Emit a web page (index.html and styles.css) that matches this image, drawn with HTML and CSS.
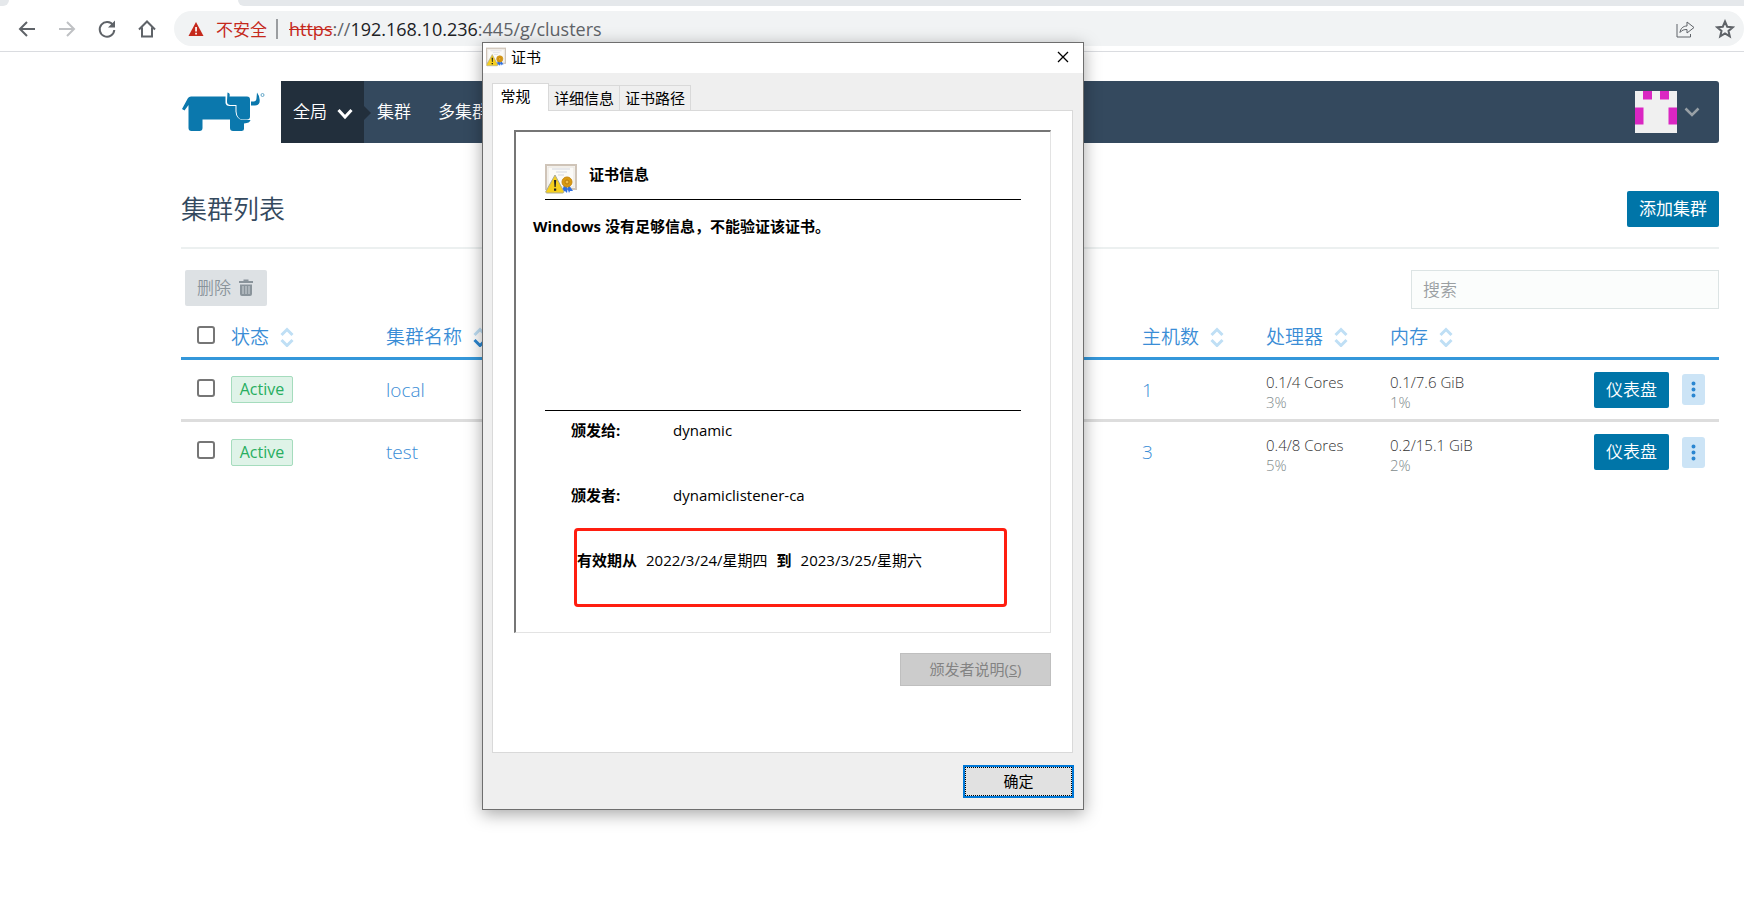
FILE: index.html
```html
<!DOCTYPE html>
<html lang="zh-CN">
<head>
<meta charset="utf-8">
<title>集群列表</title>
<link rel="stylesheet" href="styles.css">
</head>
<body>
<svg class="defs" width="0" height="0" aria-hidden="true">
  <symbol id="sort" viewBox="0 0 14 20">
    <path class="sort-up" d="M1.500 8l5.500-5.500 5.500 5.500" fill="none" stroke-width="3"/>
    <path class="sort-down" d="M1.500 13l5.500 5.500 5.500-5.500" fill="none" stroke-width="3"/>
  </symbol>
  <symbol id="cert" viewBox="0 0 32 30">
    <rect x="1" y="1" width="30" height="24" fill="#fbfaf7" stroke="#cfc4b8" stroke-width="2"/>
    <rect x="3" y="3" width="26" height="20" fill="none" stroke="#e9e4dd"/>
    <path d="M7 5h18M11 8h11M13 11h6" stroke="#d3d6de"/>
    <path d="M19 21l-2 7 3-1 2 2 1-6zM24 21l4 6-3 0-1 2-2-6z" fill="#2f6fe0"/>
    <circle cx="22" cy="18" r="5" fill="#d99a12" stroke="#c98b12"/>
    <circle cx="22" cy="18" r="2" fill="#f0bd45" stroke="#b87a0c"/>
    <path d="M10 11L0.800 27.500q-.3 1.300 1 1.500h16q1.300-.2 1-1.500z" fill="#f6cf1e" stroke="#a9a996"/>
    <path d="M9 16h2.200l-.5 7H9.500zM9 24.500h2.200v2.200H9z" fill="#222"/>
  </symbol>
</svg>

<header class="browser">
  <div class="tabstrip"><div class="tab-prev"></div><div class="tab-current"></div><div class="tab-rest"></div></div>
  <div class="toolbar">
    <div class="nav-buttons">
      <button class="nav-btn" aria-label="后退"><svg width="20" height="20" viewBox="0 0 20 20"><path d="M18 10H3M10 3l-7 7 7 7"/></svg></button>
      <button class="nav-btn nav-off" aria-label="前进"><svg width="20" height="20" viewBox="0 0 20 20"><path d="M2 10h15M10 3l7 7-7 7"/></svg></button>
      <button class="nav-btn" aria-label="刷新"><svg width="20" height="20" viewBox="0 0 20 20"><path d="M16.200 6.500A7.300 7.300 0 1 0 17.300 11"/><path class="solid" d="M18 1.500v7h-7z"/></svg></button>
      <button class="nav-btn" aria-label="主页"><svg width="20" height="20" viewBox="0 0 20 20"><path d="M2 10.500l8-8 8 8M5 8.500v9h10v-9"/></svg></button>
    </div>
    <div class="address">
      <svg width="16" height="16" viewBox="0 0 16 16"><path d="M8 1l7.500 14H.5z" fill="#c5291c"/><path d="M7.200 6h1.700v4.500H7.200zM7.200 11.700h1.700v1.700H7.200z" fill="#fff"/></svg>
      <span class="insecure">不安全</span>
      <span class="divider"></span>
      <span class="url"><s>https</s>://<b>192.168.10.236</b>:445/g/clusters</span>
      <div class="address-actions">
        <button class="nav-btn" aria-label="分享"><svg width="20" height="20" viewBox="0 0 20 20"><path class="thin" d="M2 5v13H15.500V15M5 13.500c.5-4 3-6.500 7-6.500V3l7 5.500-7 5.500V10.500c-3 0-5 .5-7 3z"/></svg></button>
        <button class="nav-btn" aria-label="收藏"><svg width="20" height="20" viewBox="0 0 20 20"><path d="M10 2.500l2.200 5.200 5.600.5-4.300 3.700 1.300 5.500-4.800-3-4.800 3 1.300-5.500-4.300-3.700 5.600-.5z"/></svg></button>
      </div>
    </div>
  </div>
</header>

<main class="page">
  <div class="topbar">
    <svg class="logo" width="84" height="42" viewBox="0 0 84 42" role="img" aria-label="Rancher">
      <path d="M7 6Q8 4.500 10 4.500H44.500V11Q45 14 48.500 14H54.500V19.500Q55 26.500 61 28H69.500Q69 31 63 31.500V37Q63 39 60.500 39H52Q49 39 49 36V27.500H21.500V36Q21.500 39 18.500 39H10.500Q7.500 39 7.500 36V13L3.500 18.500 1 17z" fill="#0b78ad"/>
      <path d="M46.500 .5Q49.500 1 48.500 4.500H66Q69 4.500 69 7.500V24.500Q69 27.500 66 27.500H61Q56 26.500 55.500 19.500L55.500 13H49Q45.500 12.500 46 8.500z" fill="#0b78ad"/>
      <path d="M76 .5Q79.500 5 78.500 10.500Q77.500 13.500 74 13.500H70V9.500H73Q75.500 9 75.500 6z" fill="#0b78ad"/>
      <circle cx="81.500" cy="3" r="1.500" fill="none" stroke="#62a6c8"/>
    </svg>
    <nav class="menu">
      <a class="scope" href="#">全局<svg width="16" height="12" viewBox="0 0 16 12"><path d="M1.500 2l6.500 7 6.500-7" fill="none" stroke="#fff" stroke-width="3"/></svg></a>
      <a class="menu-link" href="#">集群</a>
      <a class="menu-link" href="#">多集群</a>
      <button class="user" aria-label="用户">
        <svg width="42" height="42" viewBox="0 0 42 42"><path d="M0 0h42v42H0z" fill="#f0f0f0"/><path d="M8 0h9v8.500H8zM25 0h9v8.500h-9zM0 16.500h8.500v17H0zM33.500 16.500H42v17h-8.500z" fill="#da26c2"/></svg>
        <svg width="16" height="12" viewBox="0 0 16 12"><path d="M1.500 2.500l6.500 6.500 6.500-6.500" fill="none" stroke="#98a0a6" stroke-width="2.500"/></svg>
      </button>
    </nav>
  </div>

  <div class="heading">
    <h1>集群列表</h1>
    <button class="btn">添加集群</button>
  </div>

  <div class="tools">
    <button class="btn btn-delete" disabled>删除<svg width="14" height="18" viewBox="0 0 14 18"><path d="M0 2h4.500V.5h5V2H14v2H0zM1 5.500h12V15q0 2-2 2H3q-2 0-2-2z" fill="#8a949b"/><path d="M4 7v8M7 7v8M10 7v8" stroke="#cfd5d9"/></svg></button>
    <input class="search" type="text" placeholder="搜索" aria-label="搜索">
  </div>

  <table class="clusters">
    <colgroup><col class="c-check"><col class="c-state"><col><col class="c-num"><col class="c-num"><col class="c-mem"><col class="c-act"></colgroup>
    <thead>
      <tr>
        <th><input type="checkbox" aria-label="全选"></th>
        <th><a href="#">状态<svg class="sort" width="14" height="20"><use href="#sort"/></svg></a></th>
        <th><a href="#">集群名称<svg class="sort sorted" width="14" height="20"><use href="#sort"/></svg></a></th>
        <th><a href="#">主机数<svg class="sort" width="14" height="20"><use href="#sort"/></svg></a></th>
        <th><a href="#">处理器<svg class="sort" width="14" height="20"><use href="#sort"/></svg></a></th>
        <th><a href="#">内存<svg class="sort" width="14" height="20"><use href="#sort"/></svg></a></th>
        <th></th>
      </tr>
    </thead>
    <tbody>
      <tr>
        <td><input type="checkbox" aria-label="local"></td>
        <td><span class="badge">Active</span></td>
        <td><a href="#">local</a></td>
        <td><a href="#">1</a></td>
        <td class="usage">0.1/4 Cores<small>3%</small></td>
        <td class="usage">0.1/7.6 GiB<small>1%</small></td>
        <td><div class="actions"><button class="btn">仪表盘</button><button class="more" aria-label="更多"><svg width="5" height="17" viewBox="0 0 5 17"><path d="M2.500 2.500v.01M2.500 8.500v.01M2.500 14.500v.01"/></svg></button></div></td>
      </tr>
      <tr>
        <td><input type="checkbox" aria-label="test"></td>
        <td><span class="badge">Active</span></td>
        <td><a href="#">test</a></td>
        <td><a href="#">3</a></td>
        <td class="usage">0.4/8 Cores<small>5%</small></td>
        <td class="usage">0.2/15.1 GiB<small>2%</small></td>
        <td><div class="actions"><button class="btn">仪表盘</button><button class="more" aria-label="更多"><svg width="5" height="17" viewBox="0 0 5 17"><path d="M2.500 2.500v.01M2.500 8.500v.01M2.500 14.500v.01"/></svg></button></div></td>
      </tr>
    </tbody>
  </table>
</main>

<section class="dialog" role="dialog" aria-labelledby="dialog-title">
  <div class="titlebar">
    <svg width="20" height="20"><use href="#cert"/></svg>
    <span id="dialog-title">证书</span>
    <button class="close" aria-label="关闭"><svg width="12" height="12" viewBox="0 0 12 12"><path d="M1 1l10 10M11 1L1 11" stroke="#000" stroke-width="1.300"/></svg></button>
  </div>
  <div class="dialog-body">
    <div class="tabs" role="tablist">
      <button class="tab tab-active" role="tab" aria-selected="true">常规</button>
      <button class="tab" role="tab">详细信息</button>
      <button class="tab" role="tab">证书路径</button>
    </div>
    <div class="sheet">
      <div class="cert">
        <div class="cert-head"><svg width="32" height="30"><use href="#cert"/></svg><strong>证书信息</strong></div>
        <p class="cert-note">Windows 没有足够信息，不能验证该证书。</p>
        <dl class="names">
          <dt>颁发给:</dt><dd>dynamic</dd>
          <dt>颁发者:</dt><dd>dynamiclistener-ca</dd>
        </dl>
        <p class="validity"><b>有效期从</b><span>2022/3/24/星期四</span><b>到</b><span>2023/3/25/星期六</span></p>
      </div>
      <button class="win-btn issuer" disabled>颁发者说明(<u>S</u>)</button>
    </div>
    <button class="win-btn ok">确定</button>
  </div>
</section>
</body>
</html>
```
FILE: styles.css
```css
* { box-sizing: border-box; }
body {
  margin: 0;
  background: #fff;
  color: #34495e;
  font-family: "Open Sans", "Noto Sans CJK SC", sans-serif;
  font-size: 15px;
}
button { font: inherit; border: 0; padding: 0; background: none; color: inherit; }
a { color: inherit; text-decoration: none; }
.defs { position: absolute; }

/* Browser chrome */
.tabstrip { display: flex; height: 6px; background: #fff; }
.tab-prev { width: 9px; background: #e5e8eb; border-bottom-right-radius: 6px; }
.tab-current { width: 229px; }
.tab-rest { flex: 1; background: #e5e8eb; border-bottom-left-radius: 6px; }
.toolbar {
  display: flex;
  align-items: center;
  gap: 17px;
  height: 46px;
  padding-left: 17px;
  border-bottom: 1px solid #dadce0;
}
.nav-buttons { display: flex; gap: 20px; }
.nav-btn { display: block; width: 20px; height: 20px; }
.nav-btn svg, .close svg { display: block; }
.nav-btn path { fill: none; stroke: #5f6368; stroke-width: 2; }
.nav-btn .solid { fill: #5f6368; stroke: none; }
.nav-btn .thin { stroke-width: 1; }
.nav-off path { stroke: #bfc1c4; }
.address {
  flex: 1;
  display: flex;
  align-items: center;
  height: 35px;
  padding: 0 9px 0 14px;
  border-radius: 18px;
  background: #f1f3f4;
  font-size: 17px;
  color: #5f6368;
}
.insecure { margin-left: 12px; color: #c5291c; }
.divider { width: 2px; height: 20px; margin: 0 11px 0 9px; background: #9a9da0; }
.url { font-size: 18px; }
.url b { font-weight: 400; color: #202124; }
.url s { color: #c5291c; }
.address-actions { display: flex; gap: 20px; margin-left: auto; }

/* Page */
.page { padding: 29px 25px 0 181px; }
.topbar { display: flex; gap: 16px; }
.logo { margin-top: 11px; }
.menu {
  flex: 1;
  display: flex;
  align-items: center;
  height: 62px;
  background: #34495e;
  border-radius: 0 3px 3px 0;
  color: #fff;
  font-size: 17px;
  font-weight: 350;
}
.scope {
  position: relative;
  display: flex;
  align-items: center;
  gap: 10px;
  width: 83px;
  height: 62px;
  padding: 0 0 4px 12px;
  background: #222f3c;
}
.scope svg { margin-top: 8px; }
.scope::after {
  content: "";
  position: absolute;
  left: 100%;
  top: 25px;
  border: 7px solid transparent;
  border-left-color: #222f3c;
  border-right: 0;
}
.menu-link { padding-bottom: 4px; margin: 0 14px 0 13px; }
.user { display: flex; align-items: center; gap: 7px; margin: 0 19px 0 auto; }
.heading {
  display: flex;
  justify-content: space-between;
  align-items: center;
  height: 106px;
  padding-top: 27px;
  border-bottom: 2px solid #ecf0f0;
}
.heading h1 { margin: 0; padding-bottom: 2px; font-size: 26px; font-weight: 350; }
.btn {
  height: 36px;
  padding: 0 12px;
  border-radius: 2px;
  background: #0075a8;
  color: #fff;
  font-size: 17px;
  line-height: 36px;
}
.tools { display: flex; justify-content: space-between; padding: 21px 0 0 4px; }
.btn-delete { display: flex; align-items: center; gap: 8px; padding-right: 14px; background: #dde1e4; color: #8a949b; font-weight: 350; }
.search {
  width: 308px;
  height: 39px;
  padding: 0 11px;
  border: 1px solid #dce4e4;
  background: #fbfdfc;
  font: 350 17px "Open Sans", "Noto Sans CJK SC", sans-serif;
}
.search::placeholder { color: #9a9fa2; }

.clusters { width: 100%; table-layout: fixed; border-collapse: separate; border-spacing: 0; font-weight: 350; font-size: 19px; color: #3a8dd6; }
.c-check { width: 50px; }
.c-state { width: 155px; }
.c-num { width: 124px; }
.c-mem { width: 204px; }
.c-act { width: 125px; }
.clusters th, .clusters td { padding: 0; text-align: left; vertical-align: middle; }
.clusters th { height: 51px; padding-top: 7px; border-bottom: 3px solid #3497da; font-weight: 350; line-height: 28px; }
.clusters th a { display: flex; align-items: center; gap: 11px; }
.clusters td { height: 62px; }
.clusters tbody tr:not(:last-child) td { border-bottom: 3px solid #ddd; }
.clusters tbody tr:last-child td { height: 60px; }
.sort { --up: #bfdff5; --down: #bfdff5; }
.sorted { --down: #2a86d1; }
.sort-up { stroke: var(--up); }
.sort-down { stroke: var(--down); }
.clusters input { appearance: none; display: block; width: 18px; height: 18px; margin: 0 0 4px 16px; border: 2px solid #767676; border-radius: 3px; background: #fff; }
.badge {
  display: block;
  width: 62px;
  height: 27px;
  border: 1px solid #a5dcbd;
  border-radius: 2px;
  background: #dff3e8;
  color: #27ae60;
  font-size: 16px;
  font-weight: 400;
  line-height: 25px;
  text-align: center;
}
.clusters .usage { padding-top: 5px; font-size: 15px; line-height: 20px; color: #333; }
.usage small { display: block; font-size: 15px; color: #7f8c8d; }
.actions { display: flex; align-items: center; gap: 13px; }
.more { display: flex; align-items: center; justify-content: center; width: 23px; height: 31px; border-radius: 3px; background: #cce4f6; }
.more path { fill: none; stroke: #2a86d1; stroke-width: 4; stroke-linecap: round; }

/* Certificate window */
.dialog {
  position: absolute;
  left: 482px;
  top: 42px;
  width: 602px;
  border: 1px solid #6e6e6e;
  background: #efefef;
  box-shadow: 0 4px 16px rgba(0, 0, 0, .35);
  color: #000;
  font-size: 15px;
  line-height: 20px;
}
.titlebar { display: flex; align-items: center; gap: 5px; height: 30px; padding: 0 14px 2px 3px; background: #fff; }
.close { margin-left: auto; }
.dialog-body { display: flex; flex-direction: column; padding: 10px 10px 11px 9px; }
.tabs { display: flex; align-items: flex-end; }
.tab { height: 25px; padding: 0 5px; border: 1px solid #d9d9d9; border-width: 1px 1px 0 0; }
.tab-active { z-index: 1; width: 57px; height: 28px; margin-bottom: -1px; padding: 0 16px 3px 6px; border-width: 1px; border-bottom: 0; background: #fff; }
.sheet { display: flex; flex-direction: column; align-items: flex-end; gap: 20px; height: 643px; padding: 19px 21px; border: 1px solid #d9d9d9; background: #fff; }
.cert {
  width: 100%;
  height: 503px;
  padding: 31px 29px 0 16px;
  border: 1px solid #e3e3e3;
  border-top: 2px solid #767676;
  border-left: 2px solid #767676;
}
.cert-head { display: flex; align-items: center; gap: 12px; height: 37px; margin-left: 13px; padding-bottom: 5px; border-bottom: 1px solid #000; }
.cert-head strong { margin-bottom: 10px; }
.cert-note { height: 211px; margin: 0 0 0 13px; padding-top: 16px; border-bottom: 1px solid #000; font-weight: 700; text-indent: -12px; }
.names { display: grid; grid-template-columns: 102px 1fr; row-gap: 45px; margin: 9px 0 0 39px; }
.names dt { font-weight: 700; }
.names dd { margin: 0; }
.validity { display: flex; align-items: center; gap: 9px; width: 433px; height: 79px; margin: 23px 0 0 42px; padding-bottom: 15px; border: 3px solid #ff1e10; border-radius: 4px; }
.win-btn { height: 33px; padding-bottom: 2px; border: 1px solid #bfbfbf; background: #ccc; color: #838383; }
.issuer { width: 151px; }
.ok { align-self: flex-end; width: 111px; margin: 12px -1px 0 0; border: 2px solid #0078d7; outline: 1px dotted #000; outline-offset: -3px; background: #e1e1e1; color: #000; }
```
